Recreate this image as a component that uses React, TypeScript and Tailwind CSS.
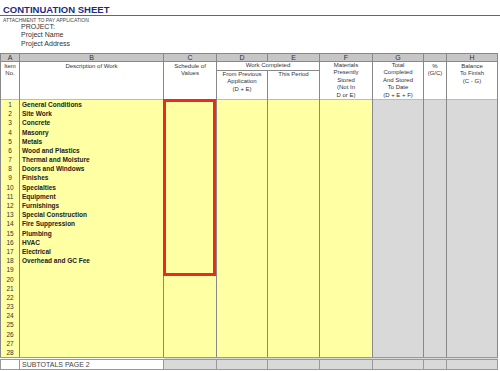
import React from 'react';

const items = [
  'General Conditions',
  'Site Work',
  'Concrete',
  'Masonry',
  'Metals',
  'Wood and Plastics',
  'Thermal and Moisture',
  'Doors and Windows',
  'Finishes',
  'Specialties',
  'Equipment',
  'Furnishings',
  'Special Construction',
  'Fire Suppression',
  'Plumbing',
  'HVAC',
  'Electrical',
  'Overhead and GC Fee',
];

const rows = Array.from({ length: 28 }, (_, i) => ({ n: i + 1, label: items[i] ?? '' }));

const letters = ['A', 'B', 'C', 'D', 'E', 'F', 'G', '', 'H'];

export default function App() {
  return (
    <div className="relative w-[500px] h-[371px] overflow-hidden bg-white font-['Liberation_Sans',Arial,sans-serif] text-[#222]">
      {/* Title block */}
      <div className="h-[53px]">
        <div className="pl-[3px] pt-[4px] h-[16px] border-b border-[#666] text-[9.5px] leading-[11px] font-bold text-[#1d2a85]">
          CONTINUATION SHEET
        </div>
        <div className="pl-[3px] pt-[1px] text-[5px] leading-[6px] text-[#444]">ATTACHMENT TO PAY APPLICATION</div>
        <div className="pl-[21px] text-[7px] leading-[8.3px] text-[#333]">
          <div>PROJECT:</div>
          <div>Project Name</div>
          <div>Project Address</div>
        </div>
      </div>

      <table className="table-fixed border-collapse w-[497px] text-[6px] leading-[7.4px] text-[#333]">
        <colgroup>
          <col className="w-[19px]" />
          <col className="w-[144px]" />
          <col className="w-[53px]" />
          <col className="w-[51px]" />
          <col className="w-[52px]" />
          <col className="w-[53px]" />
          <col className="w-[51px]" />
          <col className="w-[23px]" />
          <col className="w-[51px]" />
        </colgroup>
        <thead>
          <tr className="h-[8px] bg-[#c6c6c6]">
            {letters.map((l, i) => (
              <th key={i} className="border border-[#888] p-0 font-normal text-[7px] leading-[6px] text-[#333] text-center">
                {l}
              </th>
            ))}
          </tr>
          <tr className="h-[8px] align-top">
            <th rowSpan={2} className="border-x border-[#888] p-0 pt-[1px] font-normal text-center">Item<br />No.</th>
            <th rowSpan={2} className="border-x border-[#888] p-0 pt-[1px] font-normal text-center">Description of Work</th>
            <th rowSpan={2} className="border-x border-[#888] p-0 pt-[1px] font-normal text-center">Schedule of<br />Values</th>
            <th colSpan={2} className="border-x border-b border-[#888] p-0 font-normal text-center">Work Completed</th>
            <th rowSpan={2} className="border-x border-[#888] p-0 font-normal text-center">
              Materials<br />Presently<br />Stored<br />(Not In<br />D or E)
            </th>
            <th rowSpan={2} className="border-x border-[#888] p-0 font-normal text-center">
              Total<br />Completed<br />And Stored<br />To Date<br />(D + E + F)
            </th>
            <th rowSpan={2} className="border-x border-[#888] p-0 pt-[1px] font-normal text-center">%<br />(G/C)</th>
            <th rowSpan={2} className="border-x border-[#888] p-0 pt-[1px] font-normal text-center">
              Balance<br />To Finish<br />(C - G)
            </th>
          </tr>
          <tr className="h-[28px] align-top">
            <th className="border-x border-[#888] p-0 font-normal text-center">From Previous<br />Application<br />(D + E)</th>
            <th className="border-x border-[#888] p-0 font-normal text-center">This Period</th>
          </tr>
        </thead>
        <tbody className="border-t border-[#bbb]">
          {rows.map((r) => (
            <tr key={r.n} className="h-[9.2px] text-[6.5px] leading-[9px]">
              <td className="border-x border-[#888] bg-[#ffffa3] p-0 text-center text-[#333]">{r.n}</td>
              <td className="border-x border-[#888] bg-[#ffffa3] p-0 pl-[2px] font-bold text-[#222] whitespace-nowrap">{r.label}</td>
              <td className="border-x border-[#888] bg-[#ffffa3] p-0" />
              <td className="border-x border-[#888] bg-[#ffffa3] p-0" />
              <td className="border-x border-[#888] bg-[#ffffa3] p-0" />
              <td className="border-x border-[#888] bg-[#ffffa3] p-0" />
              <td className="border-x border-[#888] bg-[#d9d9d9] p-0" />
              <td className="border-x border-[#888] bg-[#d9d9d9] p-0" />
              <td className="border-x border-[#888] bg-[#d9d9d9] p-0" />
            </tr>
          ))}
          <tr className="h-[11px] border-t-[3px] border-double border-[#999] text-[7px] leading-[9px]">
            <td className="border-x border-b border-[#999] bg-white p-0" />
            <td className="border-x border-b border-[#999] bg-white p-0 pl-[2px] text-[#444] whitespace-nowrap">SUBTOTALS PAGE 2</td>
            <td className="border-x border-b border-[#999] bg-[#d9d9d9] p-0" />
            <td className="border-x border-b border-[#999] bg-[#d9d9d9] p-0" />
            <td className="border-x border-b border-[#999] bg-[#d9d9d9] p-0" />
            <td className="border-x border-b border-[#999] bg-[#d9d9d9] p-0" />
            <td className="border-x border-b border-[#999] bg-[#d9d9d9] p-0" />
            <td className="border-x border-b border-[#999] bg-[#d9d9d9] p-0" />
            <td className="border-x border-b border-[#999] bg-[#d9d9d9] p-0" />
          </tr>
        </tbody>
      </table>

      {/* highlight over Schedule of Values */}
      <div className="absolute left-[163px] top-[99px] w-[53px] h-[177px] border-[3px] border-[#ec2a1f]" />
    </div>
  );
}
